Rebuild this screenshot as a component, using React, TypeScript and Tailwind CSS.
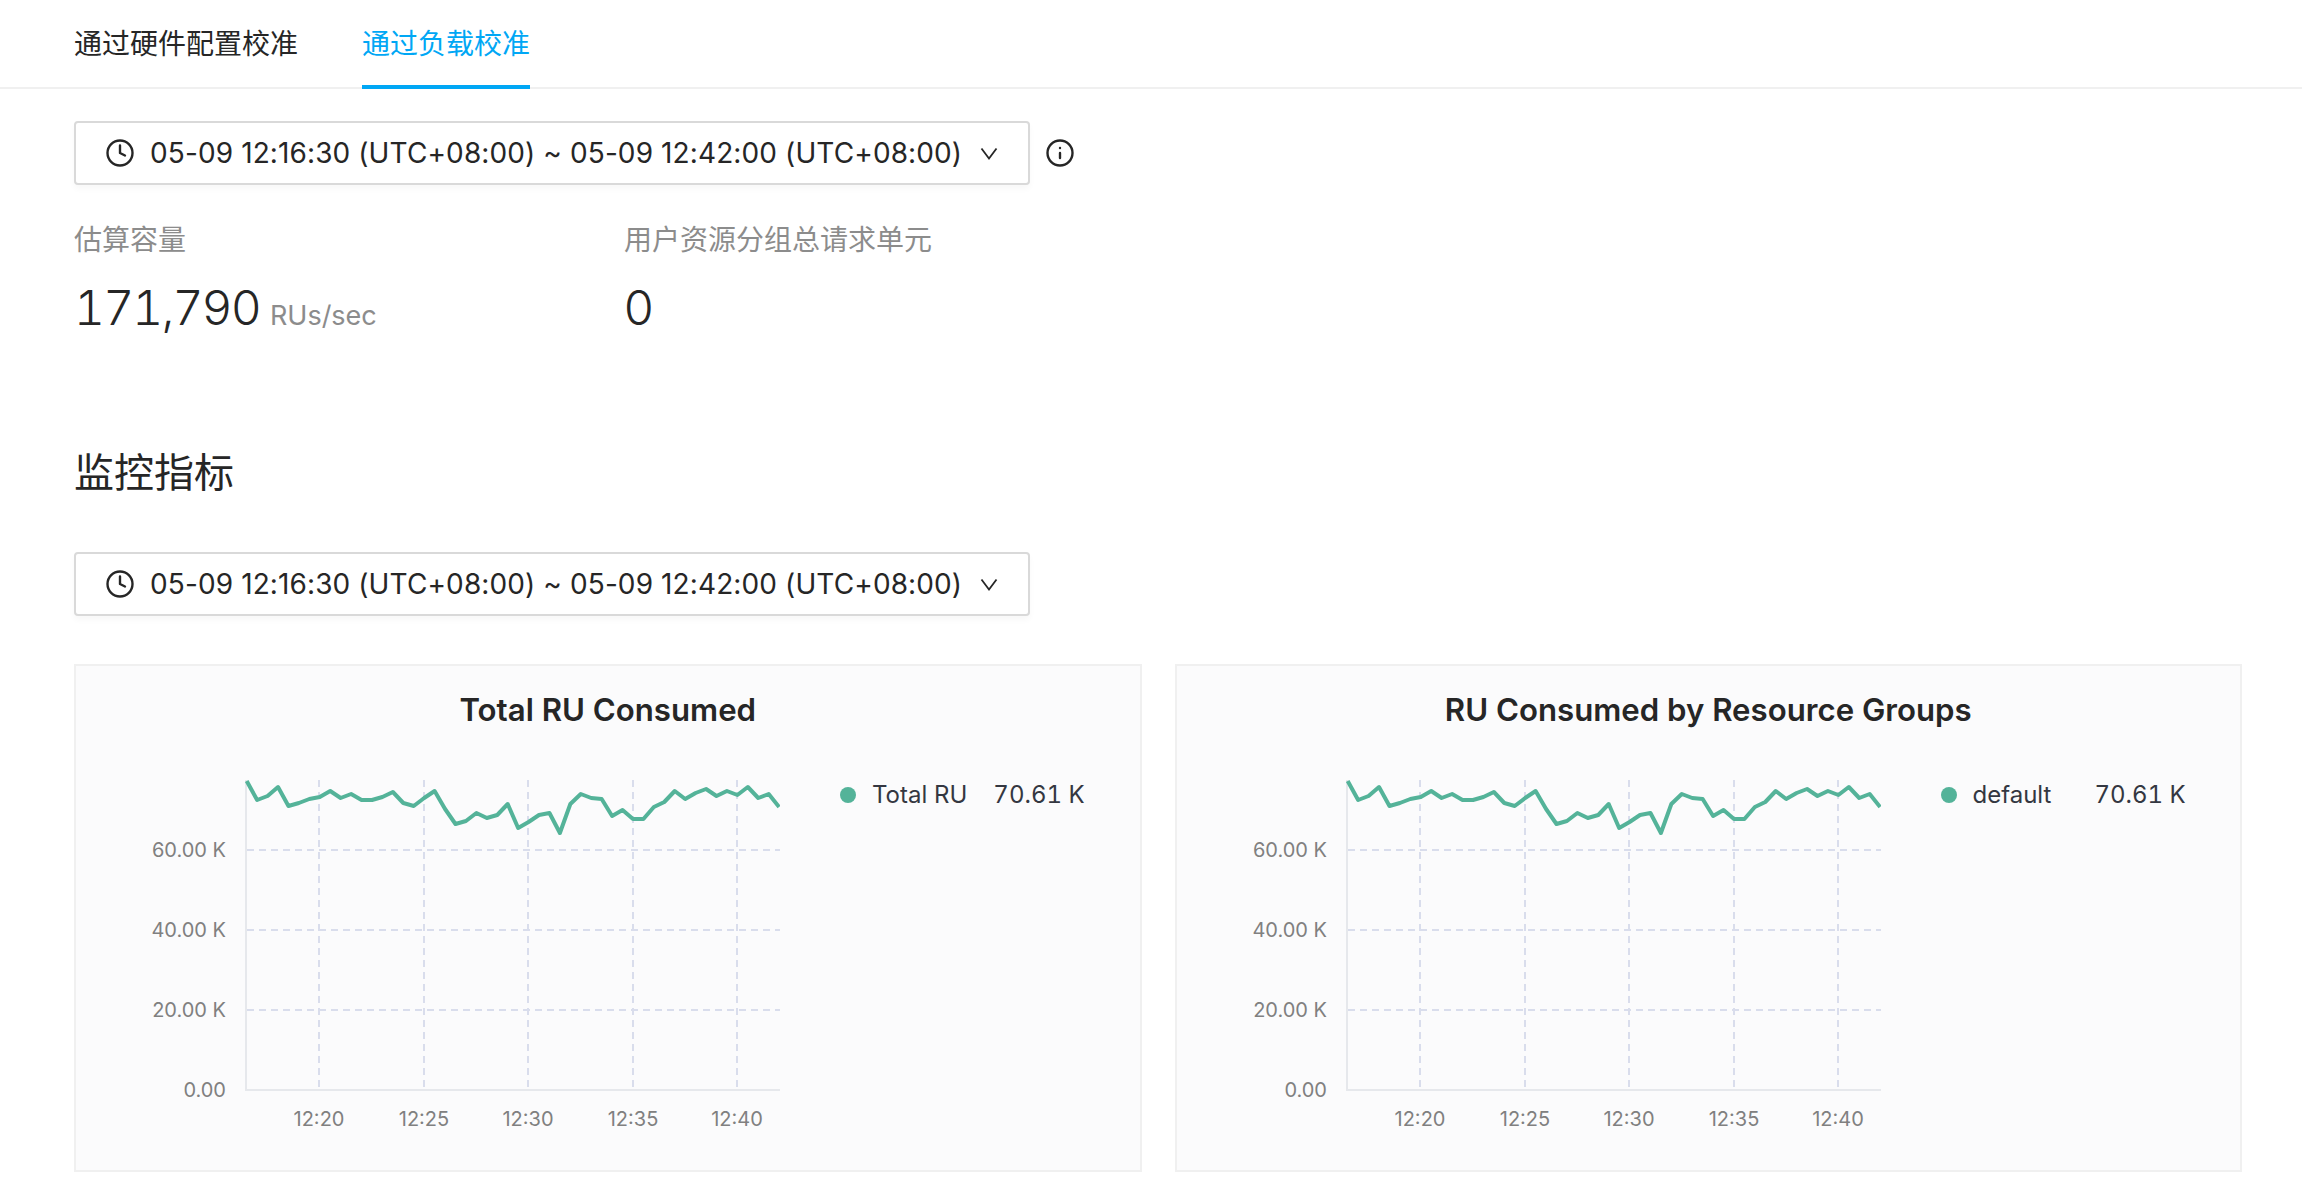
import React from "react";
import { Clock, Info } from "lucide-react";

const fontStack = "font-['Inter','Noto_Sans_CJK_SC',sans-serif]";

// y values read off the reference, one sample every ~10.4px
const series = [
  781, 800, 796, 787, 806, 803, 799, 797, 791, 798, 794, 800, 800, 797, 792, 803, 806, 798, 791, 809, 824, 821,
  813, 818, 815, 804, 828, 822, 815, 813, 833, 804, 794, 798, 799, 816, 810, 819, 819, 807, 802, 791, 799, 793,
  789, 796, 791, 795, 787, 798, 794, 807,
];

const yTicks = [
  { label: "60.00 K", y: 850 },
  { label: "40.00 K", y: 930 },
  { label: "20.00 K", y: 1010 },
  { label: "0.00", y: 1090 },
];
const xTicks = [
  { label: "12:20", x: 319 },
  { label: "12:25", x: 424 },
  { label: "12:30", x: 528 },
  { label: "12:35", x: 633 },
  { label: "12:40", x: 737 },
];

const TimeRange = () => (
  <button className="flex h-[64px] w-[956px] items-center rounded-[4px] border-2 border-[#d9d9d9] bg-white pl-[29px] text-[#262626] shadow-[0_4px_6px_rgba(0,0,0,0.03)]">
    <Clock size={30} strokeWidth={1.9} className="shrink-0" />
    <span className="ml-[15px] whitespace-nowrap text-[28px] leading-none tracking-[0.11px]">
      05-09 12:16:30 (UTC+08:00) ~ 05-09 12:42:00 (UTC+08:00)
    </span>
    <svg width="18" height="13" viewBox="0 0 18 13" fill="none" stroke="currentColor" strokeWidth="1.8" className="ml-[18px] shrink-0">
      <path d="M1.5 1.5 9 11.5l7.5-10" />
    </svg>
  </button>
);

const Chart = () => {
  // svg origin sits at the page position (130, 760), so the numbers above stay readable
  const line = series.map((y, i) => `${246.7 + i * 10.44 - 130},${y - 760}`).join(" ");
  return (
    <svg width="650" height="380" className="shrink-0">
      {yTicks.slice(0, 3).map((t) => (
        <line key={t.y} x1="117" x2="650" y1={t.y - 760} y2={t.y - 760} stroke="#d9ddec" strokeWidth="2" strokeDasharray="7 5" />
      ))}
      {xTicks.map((t) => (
        <line key={t.x} x1={t.x - 130} x2={t.x - 130} y1="20" y2="330" stroke="#d9ddec" strokeWidth="2" strokeDasharray="7 5" />
      ))}
      <line x1="116" x2="116" y1="20" y2="331" stroke="#e6e8ec" strokeWidth="2" />
      <line x1="116" x2="650" y1="330" y2="330" stroke="#e6e8ec" strokeWidth="2" />
      <polyline points={line} fill="none" stroke="#54b399" strokeWidth="4" strokeLinejoin="round" />
      {yTicks.map((t) => (
        <text key={t.label} x="96" y={t.y - 760 + 7} textAnchor="end" fontSize="20" fill="#808080">
          {t.label}
        </text>
      ))}
      {xTicks.map((t) => (
        <text key={t.label} x={t.x - 130} y="366" textAnchor="middle" fontSize="20" fill="#808080">
          {t.label}
        </text>
      ))}
    </svg>
  );
};

const ChartCard = ({ title, legend, legendGap }: { title: string; legend: string; legendGap: string }) => (
  <div className="h-[508px] border-2 border-[#f0f0f0] bg-[#fbfbfc] pt-[24px] pl-[54px]">
    <h3 className="-ml-[54px] text-center text-[31.2px] leading-[40px] font-semibold text-[#262626]">{title}</h3>
    <div className="mt-[30px] flex">
      <Chart />
      <div className="mt-[20px] ml-[60px] flex h-[30px] items-center text-[24px] text-[#343741]">
        <span className="mr-[16px] h-[16px] w-[16px] rounded-full bg-[#54b399]" />
        <span className={legendGap}>{legend}</span>
        <span className="tabular-nums">70.61 K</span>
      </div>
    </div>
  </div>
);

export default function App() {
  return (
    <div className={`${fontStack} h-[1192px] w-[2302px] overflow-hidden bg-white`}>
      <div className="flex h-[89px] gap-[64px] border-b-2 border-[#f0f0f0] pl-[74px] text-[28px]">
        <div className="h-[89px] pt-[24px] leading-[40px] text-[#262626]">通过硬件配置校准</div>
        <div className="h-[89px] border-b-4 border-[#00a7f5] pt-[24px] leading-[40px] text-[#00a7f5]">通过负载校准</div>
      </div>

      <div className="pr-[60px] pl-[74px]">
        <div className="mt-[32px] flex items-center gap-[15px]">
          <TimeRange />
          <Info size={30} strokeWidth={1.9} className="text-[#262626]" />
        </div>

        <div className="mt-[35px] flex">
          <div className="w-[550px]">
            <div className="text-[28px] leading-[40px] text-[#8c8c8c]">估算容量</div>
            <div className="mt-[18px] flex items-baseline text-[48px] leading-[60px] font-light tracking-[-1.9px] text-[#262626] tabular-nums">
              171,790
              <span className="ml-[10px] text-[27px] leading-none font-normal tracking-normal text-[#8c8c8c]">RUs/sec</span>
            </div>
          </div>
          <div>
            <div className="text-[28px] leading-[40px] text-[#8c8c8c]">用户资源分组总请求单元</div>
            <div className="mt-[18px] text-[48px] leading-[60px] font-light text-[#262626]">0</div>
          </div>
        </div>

        <h2 className="mt-[107px] text-[40px] leading-[56px] text-[#262626]">监控指标</h2>

        <div className="mt-[51px]">
          <TimeRange />
        </div>

        <div className="mt-[48px] grid grid-cols-2 gap-[33px]">
          <ChartCard title="Total RU Consumed" legend="Total RU" legendGap="mr-[26px]" />
          <ChartCard title="RU Consumed by Resource Groups" legend="default" legendGap="mr-[43px]" />
        </div>
      </div>
    </div>
  );
}
